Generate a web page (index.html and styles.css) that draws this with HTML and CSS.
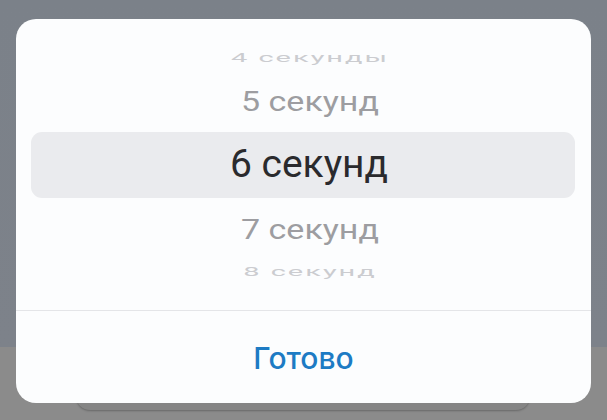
FILE: index.html
```html
<!DOCTYPE html>
<html lang="ru">
<head>
<meta charset="utf-8">
<title>Picker</title>
<link rel="stylesheet" href="styles.css">
</head>
<body>
<div class="screen">
  <div class="input-ghost"></div>
  <div class="sheet">
    <div class="picker">
      <div class="item far"><span>4 секунды</span></div>
      <div class="item near"><span>5 секунд</span></div>
      <div class="item selected"><span>6 секунд</span></div>
      <div class="item near"><span>7 секунд</span></div>
      <div class="item far"><span>8 секунд</span></div>
    </div>
    <div class="actions">
      <button class="done">Готово</button>
    </div>
  </div>
</div>
</body>
</html>
```

FILE: styles.css
```css
html, body {
  margin: 0;
  padding: 0;
}
body {
  width: 607px;
  height: 420px;
  overflow: hidden;
  font-family: Roboto, "Liberation Sans", sans-serif;
}
.screen {
  position: relative;
  width: 607px;
  height: 420px;
  box-sizing: border-box;
  padding: 19px 16px 0;
  background: linear-gradient(to bottom, #7b8189 0, #7d828a 347px, #8b8b8b 347px, #8b8b8b 100%);
}
.input-ghost {
  position: absolute;
  left: 76px;
  top: 380px;
  width: 454px;
  height: 30px;
  border-radius: 14px;
  background: #858585;
  box-shadow: 0 1px 2px rgba(0,0,0,0.25);
}
.sheet {
  position: relative;
  height: 384px;
  background: #fcfdfe;
  border-radius: 20px;
  display: flex;
  flex-direction: column;
  overflow: hidden;
}
.picker {
  height: 292px;
  display: flex;
  flex-direction: column;
  justify-content: center;
  border-bottom: 1px solid #e4e5e8;
  box-sizing: border-box;
}
.item {
  display: flex;
  align-items: center;
  justify-content: center;
  white-space: nowrap;
  padding-left: 13px;
}
.item span {
  display: block;
  line-height: 1;
}
.selected {
  height: 66px;
  margin: 0 16px 0 15px;
  padding-left: 12px;
  background: #eaebee;
  border-radius: 11px;
  color: #2a2a2d;
  font-size: 39px;
}
.near {
  height: 62px;
  color: #9d9da1;
  font-size: 34px;
}
.near span {
  transform: scaleY(0.8);
}
.far {
  height: 24px;
  color: #cbccd0;
  font-size: 29px;
  letter-spacing: 2px;
}
.far span {
  transform: scaleY(0.45);
}
.actions {
  flex: 1;
  display: flex;
  align-items: center;
  justify-content: center;
}
.done {
  border: 0;
  background: none;
  padding: 0;
  font-family: Inter, "Liberation Sans", sans-serif;
  font-size: 30px;
  font-weight: 500;
  color: #1d7bc4;
  margin-top: 2px;
}
```
